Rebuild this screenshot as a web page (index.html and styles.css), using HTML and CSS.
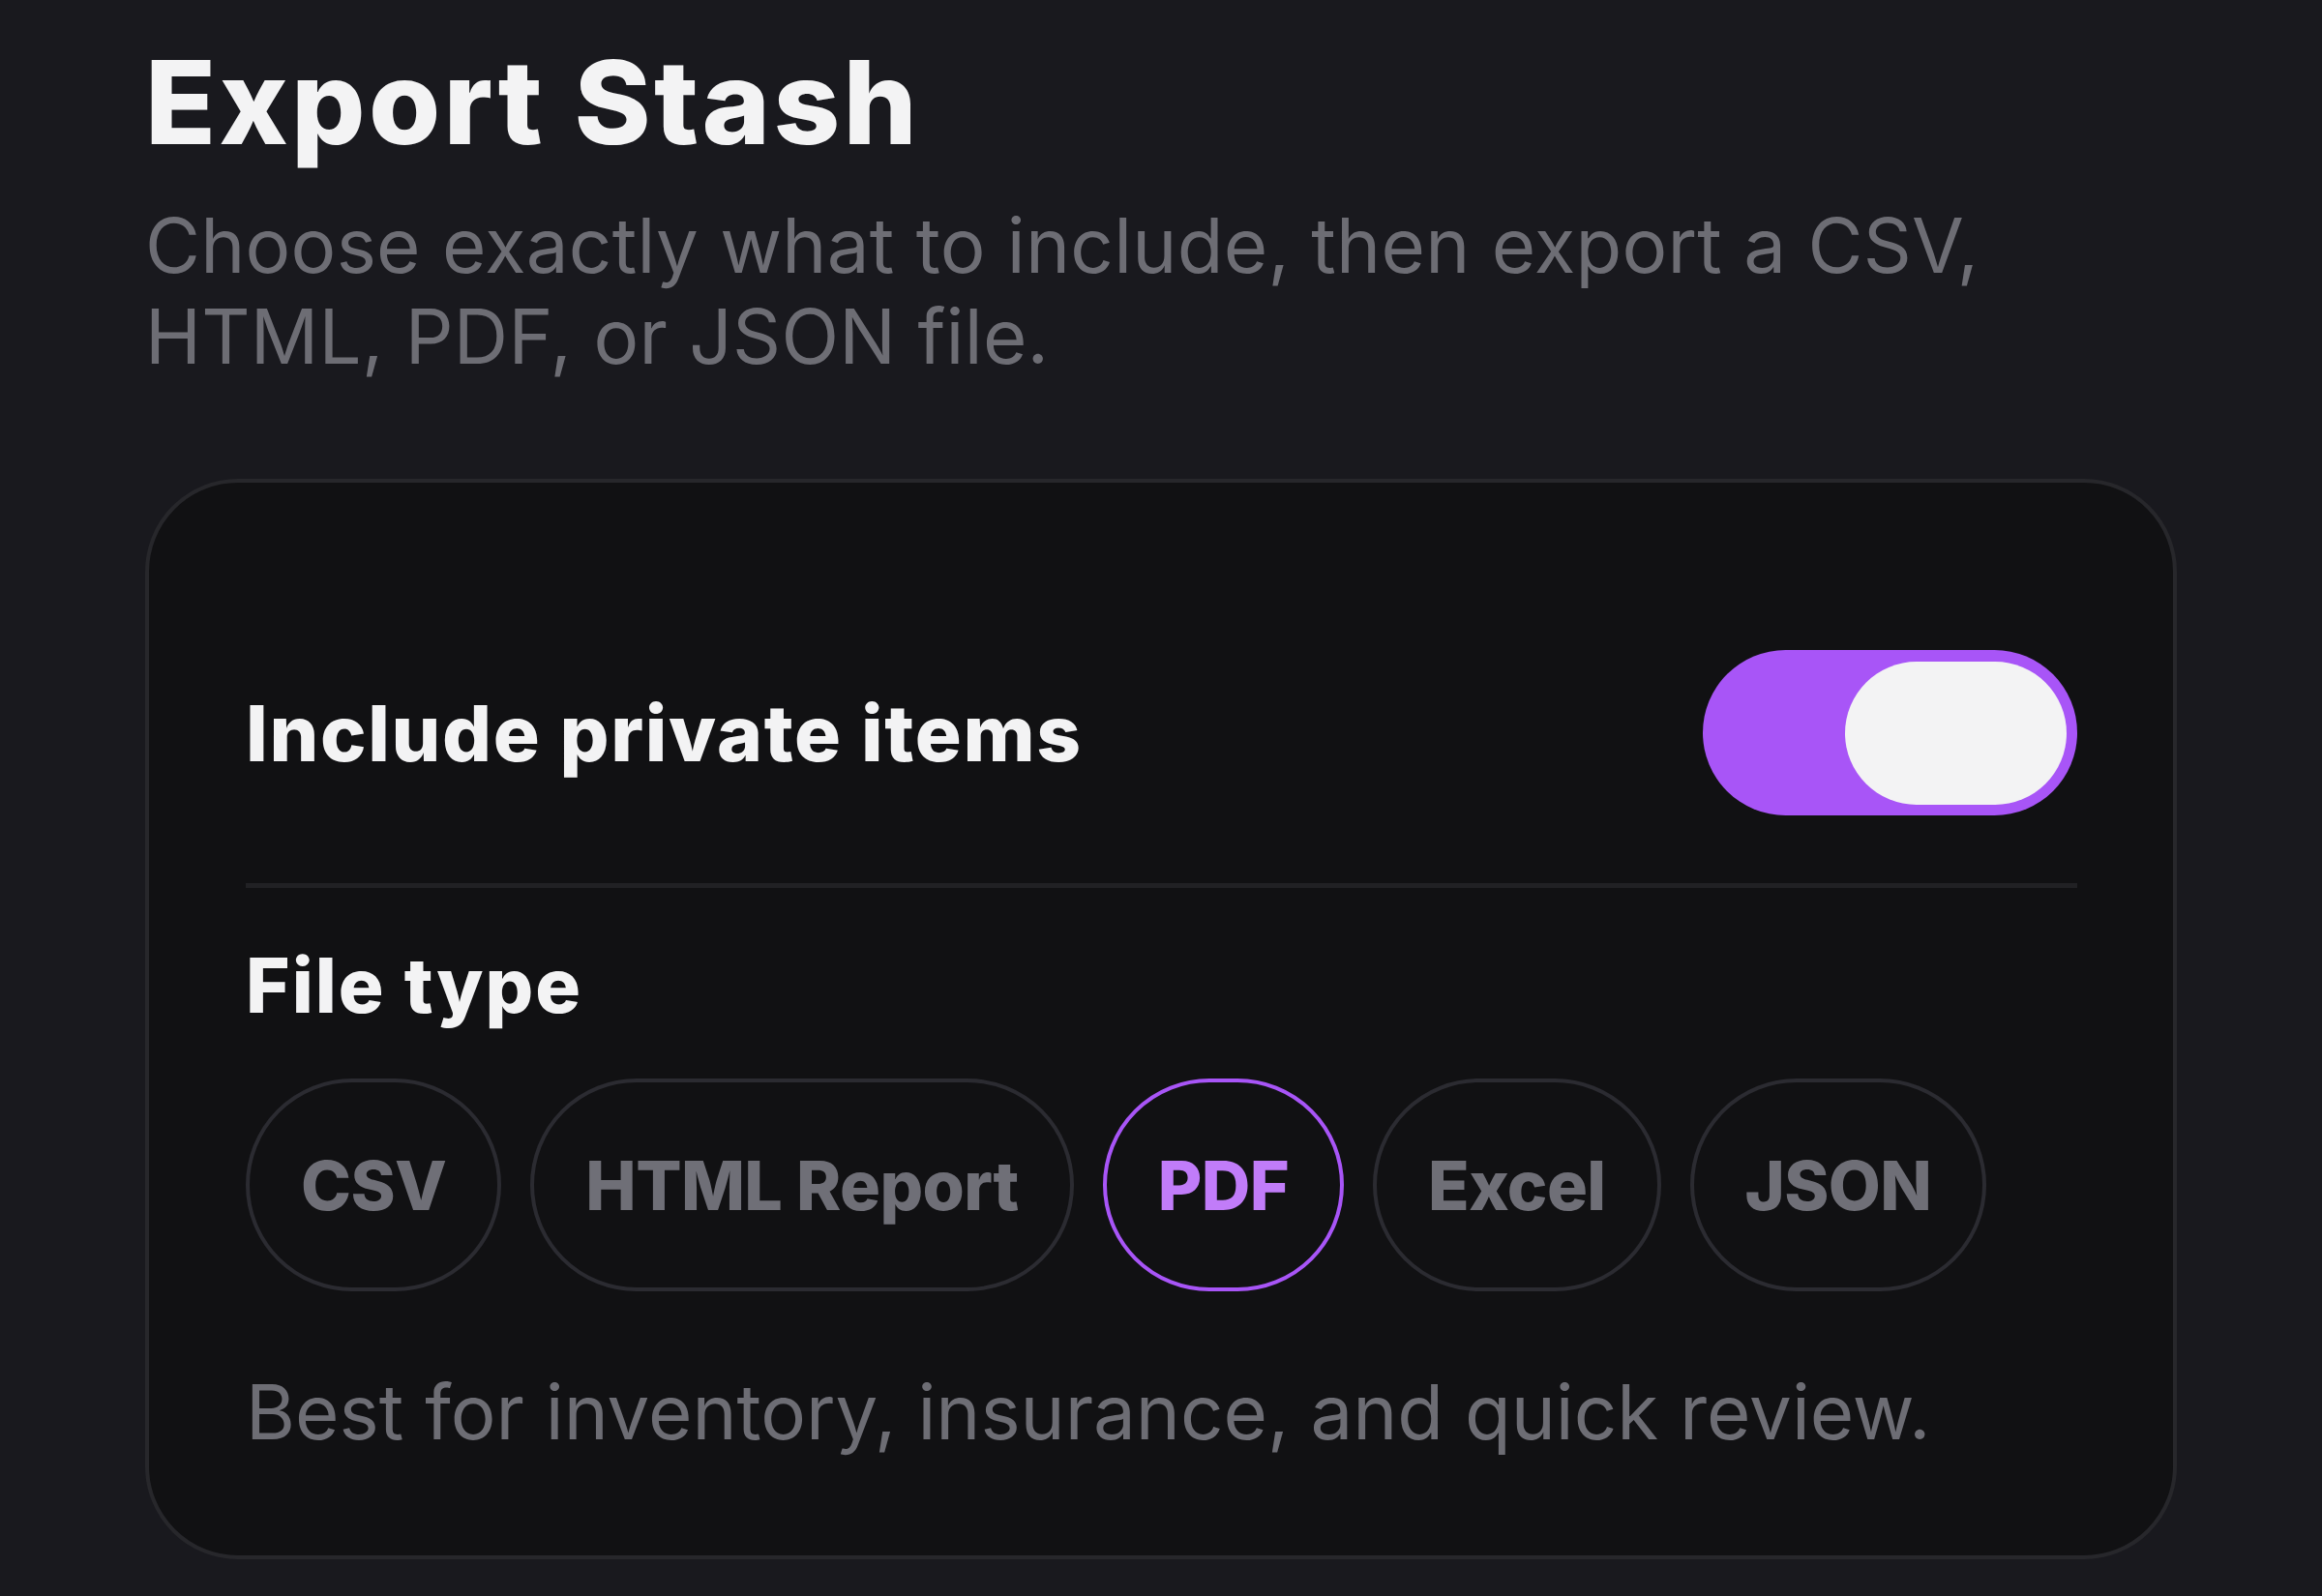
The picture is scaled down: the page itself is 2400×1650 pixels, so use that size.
FILE: index.html
```html
<!DOCTYPE html>
<html lang="en">
<head>
<meta charset="utf-8">
<title>Export Stash</title>
<link rel="stylesheet" href="styles.css">
</head>
<body>
<main class="page">
  <h1 class="title">Export Stash</h1>
  <p class="subtitle">Choose exactly what to include, then export a CSV,<br>HTML, PDF, or JSON file.</p>
  <section class="card">
    <div class="row">
      <span class="row-label">Include private items</span>
      <div class="toggle on" role="switch" aria-checked="true"><span class="knob"></span></div>
    </div>
    <div class="divider"></div>
    <h2 class="section-label">File type</h2>
    <div class="chips">
      <span class="chip">CSV</span>
      <span class="chip">HTML Report</span>
      <span class="chip selected">PDF</span>
      <span class="chip">Excel</span>
      <span class="chip">JSON</span>
    </div>
    <p class="desc">Best for inventory, insurance, and quick review.</p>
  </section>
</main>
</body>
</html>
```
FILE: styles.css
```css
html, body {
  margin: 0;
  padding: 0;
  background: #19191e;
}
body {
  font-family: "Inter", "Noto Sans", sans-serif;
  width: 2400px;
  height: 1650px;
  overflow: hidden;
}
.page {
  padding: 34px 150px 0 150px;
  box-sizing: border-box;
}
.title {
  margin: 0;
  font-size: 120px;
  line-height: 144px;
  font-weight: 800;
  color: #f3f3f4;
  letter-spacing: 3.3px;
}
.subtitle {
  margin: 29px 0 0;
  font-size: 78px;
  line-height: 94px;
  font-weight: 400;
  color: #6d6d74;
  letter-spacing: 0.25px;
}
.card {
  margin-top: 100px;
  border: 4px solid #27272b;
  border-radius: 96px;
  background: #111113;
  padding: 103px 99px 101px 100px;
}
.row {
  display: flex;
  align-items: center;
  justify-content: space-between;
  padding: 70px 0;
}
.row-label {
  font-size: 80px;
  font-weight: 800;
  color: #f3f3f4;
  letter-spacing: 1.65px;
}
.toggle {
  width: 387px;
  height: 171px;
  border-radius: 86px;
  background: #a855f7;
  display: flex;
  align-items: center;
  justify-content: flex-end;
  padding: 0 11px;
  box-sizing: border-box;
}
.knob {
  width: 229px;
  height: 148px;
  border-radius: 74px;
  background: #f3f3f4;
}
.divider {
  height: 5px;
  background: #212124;
}
.section-label {
  margin: 54px 0 0;
  font-size: 78px;
  line-height: 94px;
  font-weight: 800;
  color: #f3f3f4;
  letter-spacing: 2px;
}
.chips {
  display: flex;
  gap: 30px;
  margin-top: 49px;
}
.chip {
  height: 220px;
  box-sizing: border-box;
  border: 4px solid #2b2b31;
  border-radius: 110px;
  padding: 0 53px;
  display: flex;
  align-items: center;
  white-space: nowrap;
  font-size: 70px;
  font-weight: 800;
  letter-spacing: -0.6px;
  color: #6f6f77;
}
.chip.selected {
  border-color: #a855f7;
  color: #c17cf9;
}
.desc {
  margin: 78px 0 0;
  font-size: 78px;
  line-height: 94px;
  color: #6d6d74;
}
```
